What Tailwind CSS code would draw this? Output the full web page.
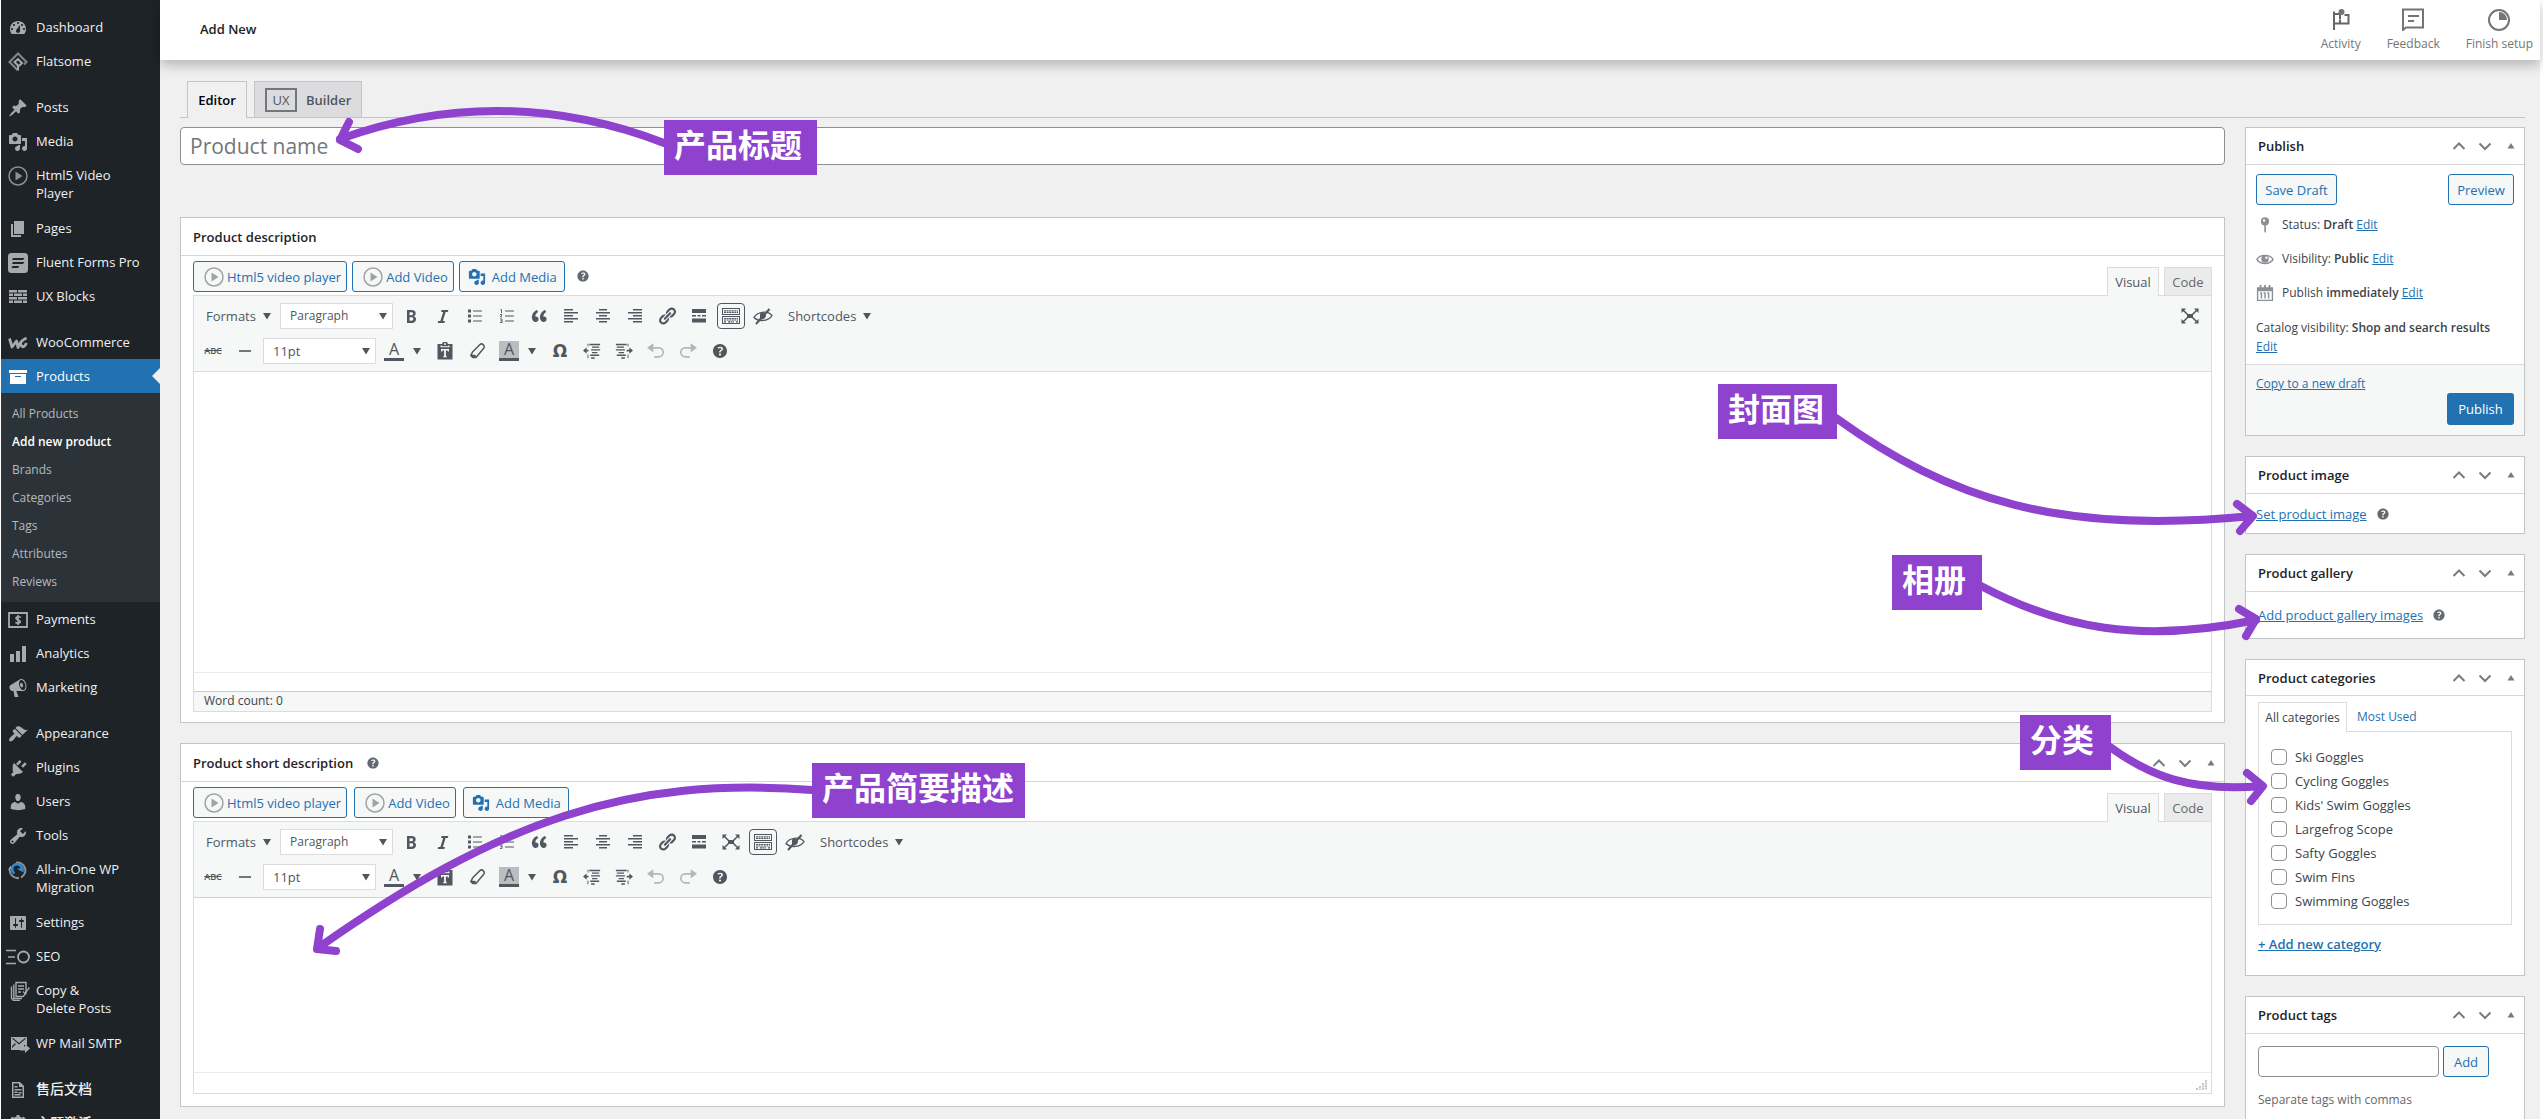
<!DOCTYPE html>
<html lang="en">
<head>
  <meta charset="UTF-8" />
  <meta name="viewport" content="width=device-width, initial-scale=1.0" />
  <title>Add New Product</title>
  <script src="https://cdn.jsdelivr.net/npm/@tailwindcss/browser@4"></script>
</head>
<body class="bg-white fill-current font-['Open_Sans','Noto_Sans_CJK_SC',sans-serif] text-[13px] leading-[18px] text-[#3c434a]">

  <!-- icon sprite -->
  <svg class="hidden">
    <symbol id="i-dashboard" viewBox="0 0 20 20"><path fill-rule="evenodd" d="M3.76 16h12.48c1.1-1.37 1.76-3.11 1.76-5 0-4.42-3.58-8-8-8s-8 3.58-8 8c0 1.89.66 3.63 1.76 5zM10 4c.55 0 1 .45 1 1s-.45 1-1 1-1-.45-1-1 .45-1 1-1zM6 6c.55 0 1 .45 1 1s-.45 1-1 1-1-.45-1-1 .45-1 1-1zm8 0c.55 0 1 .45 1 1s-.45 1-1 1-1-.45-1-1 .45-1 1-1zm-5.37 5.55L12 7v6c0 1.1-.9 2-2 2s-2-.9-2-2c0-.57.24-1.08.63-1.45zM4 10c.55 0 1 .45 1 1s-.45 1-1 1-1-.45-1-1 .45-1 1-1zm12 0c.55 0 1 .45 1 1s-.45 1-1 1-1-.45-1-1 .45-1 1-1z"/></symbol>
    <symbol id="i-flatsome" viewBox="0 0 20 20"><g fill="none" stroke="currentColor" stroke-width="2"><path d="M9.500 18L1.500 10 10 1.500 18.500 10l-2.500 2.500" opacity=".75"/><path d="M10 18.500v-5L6.500 10 10 7l4 4-2.500 2.500H9"/></g></symbol>
    <symbol id="i-post" viewBox="0 0 20 20"><path d="M10.440 3.020l1.820-1.820 6.360 6.350-1.830 1.820c-1.050-.680-2.480-.570-3.410.360l-.750.750c-.920.930-1.040 2.350-.350 3.410l-1.830 1.820-2.410-2.410-2.800 2.790c-.420.420-3.380 2.710-3.800 2.290s1.860-3.390 2.280-3.810l2.790-2.790L4.100 9.360l1.830-1.820c1.050.690 2.480.570 3.400-.360l.750-.750c.930-.920 1.050-2.350.360-3.410z"/></symbol>
    <symbol id="i-media" viewBox="0 0 20 20"><path fill-rule="evenodd" d="M13 11V4c0-.55-.45-1-1-1h-1.670L9 1H5L3.670 3H2c-.55 0-1 .45-1 1v7c0 .55.45 1 1 1h10c.55 0 1-.45 1-1zM7 4.500c1.380 0 2.500 1.120 2.500 2.500S8.380 9.500 7 9.500 4.500 8.380 4.500 7 5.620 4.500 7 4.500zM14 6h5v10.500c0 1.380-1.120 2.500-2.500 2.500S14 17.880 14 16.500s1.120-2.500 2.500-2.500c.17 0 .34.02.5.05V9h-3V6zm-4 8.050V13h2v3.500c0 1.380-1.120 2.500-2.500 2.500S7 17.880 7 16.500 8.120 14 9.500 14c.17 0 .34.02.5.05z"/></symbol>
    <symbol id="i-play" viewBox="0 0 20 20"><circle cx="10" cy="10" r="9" fill="none" stroke="currentColor" stroke-width="1.500"/><path d="M7.500 5.500v9L14.500 10z"/></symbol>
    <symbol id="i-page" viewBox="0 0 20 20"><path d="M6 15V2h10v13H6zm-1 1h8v2H3V5h2v11z"/></symbol>
    <symbol id="i-fluent" viewBox="0 0 20 20"><path fill-rule="evenodd" d="M3.500 0h13A3.500 3.500 0 0 1 20 3.500v13a3.500 3.500 0 0 1-3.500 3.500h-13A3.500 3.500 0 0 1 0 16.500v-13A3.500 3.500 0 0 1 3.500 0zM5 5l-1 2h11l1.500-2zM5 9l-1 2h11l1.500-2zM4.500 13l-1 2H10l1.500-2z"/></symbol>
    <symbol id="i-blocks" viewBox="0 0 20 20"><path d="M1 3h8v2.500H1zM10 3h9v2.500h-9zM1 6.500h4V9H1zM6 6.500h8V9H6zM15 6.500h4V9h-4zM1 10h8v2.500H1zM10 10h9v2.500h-9zM1 13.500h4V16H1zM6 13.500h8V16H6zM15 13.500h4V16h-4z"/></symbol>
    <symbol id="i-woo" viewBox="0 0 20 20"><path d="M1.500 5.500L4 14l4.500-6 1.500 6.500C11 11 13 7.500 18.500 5M12.500 10c1 5.500 4 4.500 6 0" fill="none" stroke="currentColor" stroke-width="2.800" stroke-linejoin="round"/></symbol>
    <symbol id="i-archive" viewBox="0 0 20 20"><path fill-rule="evenodd" d="M19 3v3H1V3h18zM2 7h16v10H2V7zm11 3V9H7v1h6z"/></symbol>
    <symbol id="i-pay" viewBox="0 0 20 20"><path d="M1 3h18v14H1z" fill="none" stroke="currentColor" stroke-width="1.800"/><path d="M12.800 7.600C12 6.500 8 6.200 8 8.300c0 2 4.300 1.200 4.300 3.300 0 2-3.800 1.900-4.900.6M10 5v10" fill="none" stroke="currentColor" stroke-width="1.600"/></symbol>
    <symbol id="i-chart" viewBox="0 0 20 20"><path d="M18 18V2h-4v16h4zm-6 0V7H8v11h4zm-6 0v-8H2v8h4z"/></symbol>
    <symbol id="i-megaphone" viewBox="0 0 20 20"><path fill-rule="evenodd" d="M18.150 5.940c.46 1.620.38 3.220-.02 4.480-.42 1.280-1.260 2.180-2.300 2.480-.16.06-.26.06-.4.06-.06.02-.12.02-.18.02-.06.02-.14.02-.22.02h-6.800l2.220 5.500c.02.14-.06.26-.14.34-.08.1-.24.16-.34.16H6.950c-.1 0-.26-.06-.34-.16-.08-.08-.16-.2-.14-.34l-1-5.500H4.250l-.02-.02c-.5.06-1.080-.18-1.540-.62s-.88-1.080-1.060-1.880c-.24-.8-.2-1.560-.02-2.200.18-.62.58-1.080 1.060-1.300l.02-.02 9-5.400c.1-.06.18-.1.24-.16.06-.04.14-.08.24-.12.16-.08.28-.12.5-.18 1.040-.3 2.240.1 3.220.98s1.840 2.240 2.260 3.860zm-2.580 5.980h-.02c.4-.1.74-.34 1.040-.7.58-.7.86-1.760.86-3.040 0-.64-.1-1.300-.28-1.980-.34-1.360-1.020-2.500-1.780-3.240s-1.680-1.100-2.460-.88c-.82.22-1.400.96-1.700 2-.32 1.040-.28 2.360.06 3.720.38 1.360 1 2.500 1.800 3.240.78.74 1.620 1.100 2.480.88zm-2.540-7.080c.22-.04.42-.02.62.04.38.16.76.48 1.020 1s.42 1.200.42 1.780c0 .3-.04.56-.12.8-.18.48-.44.84-.86.94-.34.1-.8-.06-1.140-.4s-.64-.86-.78-1.500c-.18-.62-.12-1.240.02-1.720s.48-.84.82-.94z"/></symbol>
    <symbol id="i-brush" viewBox="0 0 20 20"><path d="M14.480 11.060L7.410 3.990l1.500-1.500c.5-.56 2.300-.47 3.510.32 1.210.8 1.430 1.280 2.910 2.100 1.180.64 2.450 1.260 4.450.85zm-.71.71L6.700 4.700 4.930 6.470c-.39.39-.39 1.020 0 1.410l1.060 1.060c.39.39.39 1.030 0 1.420-.6.6-1.430 1.110-2.210 1.690-.35.26-.7.53-1.010.84C1.430 14.230.4 16.080 1.400 17.070c.99 1 2.840-.03 4.180-1.360.31-.31.58-.66.85-1.020.57-.78 1.080-1.610 1.690-2.210.39-.39 1.020-.39 1.410 0l1.060 1.060c.39.39 1.020.39 1.410 0z"/></symbol>
    <symbol id="i-plugin" viewBox="0 0 20 20"><path d="M13.110 4.360L9.870 7.600 8 5.730l3.240-3.240c.35-.34 1.050-.2 1.560.32.52.51.66 1.210.31 1.550zm-8 1.770l.91-1.120 9.010 9.010-1.190.84c-.71.71-2.630 1.160-3.820 1.160H8.800c-.47 0-.9.22-1.200.52l-1.850 1.850c-.27.27-.77.27-1.040 0l-1.360-1.370c-.27-.27-.27-.77 0-1.040l1.850-1.850c.31-.3-.47-.74-.47-1.210v-1.220c0-1.280-.33-3.860.38-4.570zm9.910 3.630l3.240-3.240c.34-.35.2-1.050-.32-1.560-.51-.52-1.210-.66-1.550-.31l-3.240 3.240z"/></symbol>
    <symbol id="i-user" viewBox="0 0 20 20"><path d="M10 9.250c-2.270 0-2.730-3.440-2.730-3.440C7 4.020 7.820 2 9.970 2c2.160 0 2.980 2.020 2.710 3.810 0 0-.41 3.440-2.680 3.440zm0 2.570L12.720 10c2.390 0 4.520 2.330 4.520 4.530v2.490s-3.650 1.130-7.240 1.130c-3.650 0-7.240-1.130-7.240-1.130v-2.490c0-2.250 1.940-4.480 4.470-4.480z"/></symbol>
    <symbol id="i-tools" viewBox="0 0 20 20"><path fill-rule="evenodd" d="M16.680 9.770c-1.340 1.340-3.300 1.670-4.950.99l-5.410 6.520c-.99.99-2.590.99-3.580 0s-.99-2.590 0-3.570l6.520-5.420c-.68-1.650-.35-3.610.99-4.950 1.280-1.280 3.120-1.620 4.720-1.060l-2.890 2.890 2.820 2.820 2.860-2.870c.53 1.580.18 3.390-1.080 4.650zM3.810 16.210c.4.39 1.040.39 1.430 0 .4-.4.4-1.040 0-1.430-.39-.4-1.030-.4-1.430 0-.39.39-.39 1.030 0 1.430z"/></symbol>
    <symbol id="i-migrate" viewBox="0 0 20 20"><g fill="none" stroke-width="2"><path d="M8 2.500A8 8 0 0 1 13 17.500M2 8a8 8 0 0 0 9 10" stroke="currentColor" opacity=".8"/><path d="M1 10l1.500-3L5 10" stroke="currentColor" stroke-width="1.500"/><path d="M6.500 13.500A5 5 0 1 1 14 8.500" stroke="#2f8bd0" stroke-width="2.600"/></g><path d="M9 9l7-2-.5 5.500z" fill="#2f8bd0"/></symbol>
    <symbol id="i-settings" viewBox="0 0 20 20"><path fill-rule="evenodd" d="M18 16V4c0-.55-.45-1-1-1H3c-.55 0-1 .45-1 1v12c0 .55.45 1 1 1h14c.55 0 1-.45 1-1zM8 11h1c.55 0 1 .45 1 1s-.45 1-1 1H8v1.500c0 .28-.22.5-.5.5s-.5-.22-.5-.5V13H6c-.55 0-1-.45-1-1s.45-1 1-1h1V5.500c0-.28.22-.5.5-.5s.5.22.5.5V11zm5-2h-1c-.55 0-1-.45-1-1s.45-1 1-1h1V5.500c0-.28.22-.5.5-.5s.5.22.5.5V7h1c.55 0 1 .45 1 1s-.45 1-1 1h-1v5.500c0 .28-.22.5-.5.5s-.5-.22-.5-.5V9z"/></symbol>
    <symbol id="i-seo" viewBox="0 0 24 20"><path d="M0 3.500h10M2 10h7M0 16.500h10" fill="none" stroke="currentColor" stroke-width="1.500"/><circle cx="17.500" cy="10" r="5.500" fill="none" stroke="currentColor" stroke-width="1.800"/></symbol>
    <symbol id="i-copy" viewBox="0 0 20 20"><g fill="none" stroke="currentColor" stroke-width="1.400"><path d="M6 1.500h10v11l-3 3H6z"/><path d="M3.800 3.500v14H12M1.500 5.500v12l2 2H10M8 5h6M8 8h6M8 11h3"/><path d="M13 10.500l2 2 4.500-6"/></g></symbol>
    <symbol id="i-mail" viewBox="0 0 20 20"><path fill-rule="evenodd" d="M1 3h16v8h-3v5H1zM2 4.500l7 6 7-6-1-.5-6 5-6-5zM2 14l4-4-1-.8-3 3z"/><path d="M10 12.500h5V10l5 4.500-5 4.500v-2.500h-5z"/></symbol>
    <symbol id="i-doc" viewBox="0 0 20 20"><path fill-rule="evenodd" d="M4 2h8l4 4v12H4zM5.500 3.500v13h9V7H11V3.500z"/><path d="M6.500 6h3v1.500h-3zM6.500 9h7v1.500h-7zM6.500 11.500h3V13h-3zM10.500 12h3v1.500h-3zM6.500 14h6v1.500h-6z"/></symbol>
    <symbol id="i-gear" viewBox="0 0 20 20"><circle cx="10" cy="10" r="6" fill="none" stroke="currentColor" stroke-width="3"/><path d="M8.500 1h3v3h-3zM2.500 4.500l2-2L7 5 5 7zM15.500 2.500l2 2L15 7l-2-2z"/></symbol>
    <symbol id="i-help" viewBox="0 0 20 20"><path fill-rule="evenodd" d="M17 10c0-3.870-3.140-7-7-7-3.870 0-7 3.130-7 7s3.130 7 7 7c3.860 0 7-3.130 7-7zm-6.300 1.480H9.140v-.43c0-.38.08-.7.24-.98s.46-.57.88-.89c.41-.29.68-.53.81-.71.14-.18.2-.39.2-.62 0-.25-.09-.44-.28-.58-.19-.13-.45-.19-.79-.19-.58 0-1.250.19-2 .57l-.64-1.280c.87-.49 1.800-.74 2.770-.74.81 0 1.450.2 1.920.58.48.39.71.91.71 1.550 0 .43-.09.8-.29 1.110-.19.32-.57.67-1.110 1.060-.38.28-.61.49-.71.63-.1.15-.15.34-.15.57v.35zm-1.470 2.740c-.18-.17-.27-.42-.27-.73 0-.33.08-.58.26-.75s.43-.25.77-.25c.32 0 .57.09.75.26s.27.42.27.74c0 .3-.09.55-.27.72-.18.18-.43.27-.75.27-.33 0-.58-.09-.76-.26z"/></symbol>
    <symbol id="i-caret" viewBox="0 0 8 8"><path d="M0 1h8L4 7.500z"/></symbol>
    <symbol id="i-up" viewBox="0 0 14 14"><path d="M1.500 10L7 4.500l5.500 5.500" fill="none" stroke="currentColor" stroke-width="2"/></symbol>
    <symbol id="i-down" viewBox="0 0 14 14"><path d="M1.500 4.500L7 10l5.500-5.500" fill="none" stroke="currentColor" stroke-width="2"/></symbol>
    <symbol id="i-toggle" viewBox="0 0 14 14"><path d="M3.500 9.500h7L7 4z"/></symbol>
    <symbol id="i-bold" viewBox="0 0 20 20"><path fill-rule="evenodd" d="M6 4v13h4.540c1.370 0 2.460-.33 3.260-1 .8-.66 1.200-1.580 1.200-2.770 0-.84-.17-1.510-.51-2.010s-.9-.85-1.670-1.030v-.09c.57-.1 1.020-.4 1.360-.9s.51-1.130.51-1.910c0-1.140-.39-1.980-1.170-2.500C12.750 4.260 11.500 4 9.780 4H6zm2.570 5.150V6.260h1.360c.73 0 1.270.11 1.610.32.34.22.51.58.51 1.070 0 .54-.16.92-.47 1.150s-.82.35-1.510.35h-1.500zm0 2.190h1.600c1.440 0 2.160.53 2.160 1.610 0 .6-.17 1.050-.51 1.340s-.86.43-1.570.43H8.570v-3.380z"/></symbol>
    <symbol id="i-italic" viewBox="0 0 20 20"><path d="M14.780 6h-2.130l-2.800 9h2.120l-.62 2H4.600l.62-2h2.140l2.800-9H8.030l.62-2h6.750z"/></symbol>
    <symbol id="i-ul" viewBox="0 0 20 20"><path d="M3 3.500h3v3H3zM3 8.500h3v3H3zM3 13.500h3v3H3zM8 4.500h9v1H8zM8 9.500h9v1H8zM8 14.500h9v1H8z"/></symbol>
    <symbol id="i-ol" viewBox="0 0 20 20"><path d="M8 4.500h9v1H8zM8 9.500h9v1H8zM8 14.500h9v1H8z"/><path d="M3.500 3.500h1v3.500M3 8.500h2L3.500 11H5M3 13h2v3.500H3M3.500 14.800H5" fill="none" stroke="currentColor" stroke-width=".9"/></symbol>
    <symbol id="i-quote" viewBox="0 0 20 20"><path d="M9.490 13.220c0-.74-.2-1.380-.61-1.900-.62-.78-1.830-.88-2.530-.72-.29-1.650 1.110-3.750 2.920-4.650L7.880 4c-2.730 1.300-5.420 4.280-4.960 8.050C3.210 14.430 4.590 16 6.540 16c.85 0 1.560-.25 2.120-.75s.83-1.180.83-2.030zm8.050 0c0-.74-.2-1.380-.61-1.900-.63-.78-1.830-.88-2.530-.72-.29-1.650 1.110-3.750 2.920-4.650L15.930 4c-2.730 1.300-5.410 4.280-4.950 8.050.29 2.380 1.660 3.950 3.610 3.950.85 0 1.560-.25 2.120-.75s.83-1.180.83-2.030z"/></symbol>
    <symbol id="i-left" viewBox="0 0 20 20"><path d="M3 3h9v1.500H3zM3 6h14v1.500H3zM3 9h9v1.500H3zM3 12h14v1.500H3zM3 15h9v1.500H3z"/></symbol>
    <symbol id="i-center" viewBox="0 0 20 20"><path d="M6 3h8v1.500H6zM3 6h14v1.500H3zM6 9h8v1.500H6zM3 12h14v1.500H3zM6 15h8v1.500H6z"/></symbol>
    <symbol id="i-right" viewBox="0 0 20 20"><path d="M8 3h9v1.500H8zM3 6h14v1.500H3zM8 9h9v1.500H8zM3 12h14v1.500H3zM8 15h9v1.500H8z"/></symbol>
    <symbol id="i-link" viewBox="0 0 20 20"><path d="M17.740 2.760c1.680 1.690 1.680 4.410 0 6.100l-1.530 1.520c-1.120 1.120-2.700 1.470-4.140 1.090l2.620-2.610.76-.77.76-.76c.84-.84.84-2.200 0-3.040-.84-.85-2.200-.85-3.040 0l-.77.76-3.380 3.380c-.37-1.440-.02-3.020 1.100-4.140l1.520-1.530c1.690-1.680 4.420-1.680 6.100 0zM8.590 13.430l5.340-5.340c.42-.42.42-1.100 0-1.520-.44-.43-1.130-.39-1.530 0l-5.330 5.340c-.42.42-.42 1.100 0 1.520.44.43 1.130.39 1.520 0zm-.76 2.290l4.140-4.150c.38 1.440.03 3.020-1.090 4.140l-1.520 1.530c-1.690 1.680-4.410 1.680-6.100 0-1.680-1.680-1.680-4.420 0-6.100l1.530-1.520c1.120-1.120 2.700-1.470 4.140-1.100l-4.140 4.150c-.85.84-.85 2.200 0 3.050.84.84 2.200.84 3.040 0z"/></symbol>
    <symbol id="i-more" viewBox="0 0 20 20"><path d="M3 3h14v4H3zM3 9h4v1.500H3zM8.500 9h3v1.500h-3zM13 9h4v1.500h-4zM3 12.500h14v4H3z"/></symbol>
    <symbol id="i-kitchen" viewBox="0 0 20 20"><path fill-rule="evenodd" d="M1 2h18v7H1zM2 3v5h16V3zM1 10h18v8H1zM2 11v6h16v-6z"/><path d="M3 4.800h14M3 6.500h14M3 12.500h14M3 14h14M3 15.800h2M7 15.800h6M15 15.800h2" fill="none" stroke="currentColor" stroke-width="1.200" stroke-dasharray="2 .6"/></symbol>
    <symbol id="i-hide" viewBox="0 0 20 20"><path d="M1 11.500C4 6 14 4 19 9.500 16 15 6 16.500 1 11.500z" fill="none" stroke="currentColor" stroke-width="1.300"/><path d="M7 7.500c3-1.500 6-.5 6 2 0 3-4 5-6 3.500z"/><path d="M3 18L16.500 3" fill="none" stroke="currentColor" stroke-width="2"/></symbol>
    <symbol id="i-full" viewBox="0 0 20 20"><path d="M7 8h6v4H7zM1.500 2.500H6L1.500 7zM18.500 2.500H14L18.500 7zM1.500 17.500H6L1.500 13zM18.500 17.500H14l4.500-4.500z"/><path d="M3 4l5 5M17 4l-5 5M3 16l5-5M17 16l-5-5" fill="none" stroke="currentColor" stroke-width="1.500"/></symbol>
    <symbol id="i-hr" viewBox="0 0 20 20"><path d="M4 9.200h12v1.600H4z"/></symbol>
    <symbol id="i-paste" viewBox="0 0 20 20"><path fill-rule="evenodd" d="M7 3l1-2h4l1 2h4.500v15.500h-15V3zM9 2.200v1.600h2V2.200zM5.500 4.500v1.700h9V4.500h-1.300v.7H6.800v-.7zM6 8v2.500h1.200l.3-1h1.600v5.500l-1 .4v.9h3.800v-.9l-1-.4V9.500h1.600l.3 1H14V8z"/></symbol>
    <symbol id="i-eraser" viewBox="0 0 20 20"><path d="M5.500 11L13 3.500c1-1 2.500-.5 3.500.5s1 2.500 0 3.500L9 16.500H6L4 14.500z" fill="none" stroke="currentColor" stroke-width="1.500"/><path d="M3.500 13.500L9 14l-1 3H5.500l-2-2z"/></symbol>
    <symbol id="i-outdent" viewBox="0 0 20 20"><path d="M7 2h12v1.500H7zM10 5h8v1.500h-8zM9 8h10v1.500H9zM10 11h6v1.500h-6zM8 14h10v1.500H8zM9 17h4v1.500H9zM6 8.500H4V6L0 9.500 4 13v-2.500h2zM5 2h1v3H5zM5 14h1v4H5z"/></symbol>
    <symbol id="i-indent" viewBox="0 0 20 20"><path d="M1 2h12v1.500H1zM2 5h8v1.500H2zM1 8h10v1.500H1zM4 11h6v1.500H4zM2 14h10v1.500H2zM7 17h4v1.500H7zM13 8.500h3V6l4 3.500L16 13v-2.500h-3zM14 2h1v3h-1zM14 14h1v4h-1z"/></symbol>
    <symbol id="i-undo" viewBox="0 0 20 20"><path d="M4 6.500h9a5 5 0 0 1 0 10H8" fill="none" stroke="currentColor" stroke-width="1.800"/><path d="M7 1.500v10L0 6.500z"/></symbol>
    <symbol id="i-redo" viewBox="0 0 20 20"><path d="M16 6.500H7a5 5 0 0 0 0 10h5" fill="none" stroke="currentColor" stroke-width="1.800"/><path d="M13 1.500v10l7-5z"/></symbol>
    <symbol id="i-grip" viewBox="0 0 12 12"><path d="M1 10v2M4 8v4M7 5v7M10 2v10" fill="none" stroke="currentColor" stroke-width="1" stroke-dasharray="2 .5"/></symbol>
    <symbol id="i-pin" viewBox="0 0 20 20"><circle cx="10" cy="6" r="4.500"/><path d="M9.200 9h1.800v10l-1.800-1.500z"/><circle cx="9" cy="5" r="1.300" fill="#fff"/></symbol>
    <symbol id="i-eye" viewBox="0 0 20 20"><path d="M1 10.500C4.500 4.500 15.500 4.500 19 10.500 15.500 16.500 4.500 16.500 1 10.500z" fill="none" stroke="currentColor" stroke-width="1.600"/><circle cx="10" cy="10" r="4.200"/><circle cx="11.500" cy="8.500" r="1.300" fill="#fff"/></symbol>
    <symbol id="i-calendar" viewBox="0 0 20 20"><path fill-rule="evenodd" d="M1 3.500h3V1h2v2.500h3V1h2v2.500h3V1h2v2.500h3V19H1zM2.500 8v9.500h15V8z"/><path d="M6 9.500v6.500M10 9.500v6.500M14 9.500v6.500M4.500 10H6M8.500 10H10M12.500 10H14" fill="none" stroke="currentColor" stroke-width="1.600"/></symbol>
  </svg>

  <div class="relative flex h-screen overflow-hidden pr-[3px] pl-px">

    <!-- admin menu -->
    <nav class="w-[159px] shrink-0 bg-[#1d2327] pt-[10px] text-[#f0f0f1]">
      <ul>
        <li><a href="#" class="flex h-[34px] items-start gap-2 py-2 pl-[7px]"><svg class="size-5 shrink-0 text-[#a7aaad]"><use href="#i-dashboard"/></svg>Dashboard</a></li>
        <li class="mb-3"><a href="#" class="flex h-[34px] items-start gap-2 py-2 pl-[7px]"><svg class="size-5 shrink-0 text-[#a7aaad]"><use href="#i-flatsome"/></svg>Flatsome</a></li>
        <li><a href="#" class="flex h-[34px] items-start gap-2 py-2 pl-[7px]"><svg class="size-5 shrink-0 text-[#a7aaad]"><use href="#i-post"/></svg>Posts</a></li>
        <li><a href="#" class="flex h-[34px] items-start gap-2 py-2 pl-[7px]"><svg class="size-5 shrink-0 text-[#a7aaad]"><use href="#i-media"/></svg>Media</a></li>
        <li><a href="#" class="flex h-[53px] items-start gap-2 py-2 pl-[7px]"><svg class="size-5 shrink-0 text-[#8c8f94]"><use href="#i-play"/></svg>Html5 Video<br>Player</a></li>
        <li><a href="#" class="flex h-[34px] items-start gap-2 py-2 pl-[7px]"><svg class="size-5 shrink-0 text-[#a7aaad]"><use href="#i-page"/></svg>Pages</a></li>
        <li><a href="#" class="flex h-[34px] items-start gap-2 py-2 pl-[7px]"><svg class="size-5 shrink-0 text-[#a7aaad]"><use href="#i-fluent"/></svg>Fluent Forms Pro</a></li>
        <li class="mb-3"><a href="#" class="flex h-[34px] items-start gap-2 py-2 pl-[7px]"><svg class="size-5 shrink-0 text-[#a7aaad]"><use href="#i-blocks"/></svg>UX Blocks</a></li>
        <li><a href="#" class="flex h-[34px] items-start gap-2 py-2 pl-[7px]"><svg class="size-5 shrink-0 text-[#a7aaad]"><use href="#i-woo"/></svg>WooCommerce</a></li>
        <li>
          <a href="#" class="relative flex h-[34px] items-start gap-2 bg-[#2271b1] py-2 pl-[7px] text-white"><svg class="size-5 shrink-0"><use href="#i-archive"/></svg>Products
            <span class="absolute top-[9px] right-0 border-y-8 border-r-8 border-y-transparent border-r-[#f0f0f1]"></span></a>
          <ul class="bg-[#2c3338] pt-[7px] pb-[6px] text-xs leading-7 text-[#b4b9be]">
            <li><a href="#" class="block pl-[11px]">All Products</a></li>
            <li><a href="#" class="block pl-[11px] font-semibold text-white">Add new product</a></li>
            <li><a href="#" class="block pl-[11px]">Brands</a></li>
            <li><a href="#" class="block pl-[11px]">Categories</a></li>
            <li><a href="#" class="block pl-[11px]">Tags</a></li>
            <li><a href="#" class="block pl-[11px]">Attributes</a></li>
            <li><a href="#" class="block pl-[11px]">Reviews</a></li>
          </ul>
        </li>
        <li><a href="#" class="flex h-[34px] items-start gap-2 py-2 pl-[7px]"><svg class="size-5 shrink-0 text-[#a7aaad]"><use href="#i-pay"/></svg>Payments</a></li>
        <li><a href="#" class="flex h-[34px] items-start gap-2 py-2 pl-[7px]"><svg class="size-5 shrink-0 text-[#a7aaad]"><use href="#i-chart"/></svg>Analytics</a></li>
        <li class="mb-3"><a href="#" class="flex h-[34px] items-start gap-2 py-2 pl-[7px]"><svg class="size-5 shrink-0 text-[#a7aaad]"><use href="#i-megaphone"/></svg>Marketing</a></li>
        <li><a href="#" class="flex h-[34px] items-start gap-2 py-2 pl-[7px]"><svg class="size-5 shrink-0 text-[#a7aaad]"><use href="#i-brush"/></svg>Appearance</a></li>
        <li><a href="#" class="flex h-[34px] items-start gap-2 py-2 pl-[7px]"><svg class="size-5 shrink-0 text-[#a7aaad]"><use href="#i-plugin"/></svg>Plugins</a></li>
        <li><a href="#" class="flex h-[34px] items-start gap-2 py-2 pl-[7px]"><svg class="size-5 shrink-0 text-[#a7aaad]"><use href="#i-user"/></svg>Users</a></li>
        <li><a href="#" class="flex h-[34px] items-start gap-2 py-2 pl-[7px]"><svg class="size-5 shrink-0 text-[#a7aaad]"><use href="#i-tools"/></svg>Tools</a></li>
        <li><a href="#" class="flex h-[53px] items-start gap-2 py-2 pl-[7px]"><svg class="size-5 shrink-0 text-[#a7aaad]"><use href="#i-migrate"/></svg>All-in-One WP<br>Migration</a></li>
        <li><a href="#" class="flex h-[34px] items-start gap-2 py-2 pl-[7px]"><svg class="size-5 shrink-0 text-[#a7aaad]"><use href="#i-settings"/></svg>Settings</a></li>
        <li><a href="#" class="flex h-[34px] items-start gap-[6px] py-2 pl-[5px]"><svg class="h-5 w-6 shrink-0 text-[#a7aaad]"><use href="#i-seo"/></svg>SEO</a></li>
        <li><a href="#" class="flex h-[53px] items-start gap-[6px] py-2 pl-[9px]"><svg class="size-5 shrink-0 text-[#a7aaad]"><use href="#i-copy"/></svg>Copy &amp;<br>Delete Posts</a></li>
        <li class="mb-3"><a href="#" class="flex h-[34px] items-start gap-[6px] py-2 pl-[9px]"><svg class="size-5 shrink-0 text-[#a7aaad]"><use href="#i-mail"/></svg>WP Mail SMTP</a></li>
        <li><a href="#" class="flex h-[34px] items-start gap-2 py-2 pl-[7px] text-sm leading-[18px] font-medium"><svg class="size-5 shrink-0 text-[#a7aaad]"><use href="#i-doc"/></svg>售后文档</a></li>
        <li><a href="#" class="flex h-[34px] items-start gap-2 py-2 pl-[7px] text-sm leading-[18px] font-medium"><svg class="size-5 shrink-0 text-[#a7aaad]"><use href="#i-gear"/></svg>主题激活</a></li>
      </ul>
    </nav>

    <div class="min-w-0 flex-1 bg-[#f0f0f1]">
      <header class="flex h-[60px] items-start justify-between bg-white pr-[7px] pl-10 shadow-[0_5px_12px_rgba(0,0,0,0.25)]">
        <h1 class="pt-5 font-semibold text-[#1e1e1e]">Add New</h1>
        <div class="flex gap-[26px] pt-[7px] text-xs leading-[18px] text-[#757575]">
          <button class="flex flex-col items-center gap-1"><svg class="size-6" viewBox="0 0 24 24" fill="none" stroke="#666" stroke-width="2"><path d="M5 4.500V23M5 7h6v5M5 16.500h6v-4M11 16.500h8.500V8h-4"/><circle cx="12.500" cy="5" r="3" fill="#757575" stroke="none"/></svg>Activity</button>
          <button class="flex flex-col items-center gap-1"><svg class="size-6" viewBox="0 0 24 24" fill="none" stroke="#757575" stroke-width="2"><path d="M2 2.500h20v18H5L2 23zM7 9h11M7 14h6"/></svg>Feedback</button>
          <button class="flex flex-col items-center gap-1"><svg class="size-6" viewBox="0 0 24 24" fill="none" stroke="#757575" stroke-width="2"><circle cx="12" cy="13" r="10"/><path d="M12 13V5a8 8 0 0 1 8 8z" fill="#757575" stroke="none"/></svg>Finish setup</button>
        </div>
      </header>

      <main class="pr-[15px] pl-5">
        <div class="mt-[21px] flex h-[37px] items-end gap-[7px] border-b border-[#c3c4c7] pl-[7px] font-semibold">
          <a href="#" class="-mb-px flex h-[37px] w-[60px] items-center justify-center border border-b-0 border-[#c3c4c7] bg-[#f0f0f1] text-black">Editor</a>
          <a href="#" class="flex h-9 items-center gap-[9px] border border-b-0 border-[#c3c4c7] bg-[#dcdcde] px-[10px] text-[#50575e]"><span class="flex h-6 w-8 items-center justify-center border-2 border-[#72777c] font-normal">UX</span>Builder</a>
        </div>

        <div class="mt-[9px] flex gap-5">
          <div class="min-w-0 flex-1">
            <input type="text" aria-label="Product name" placeholder="Product name" class="block h-[38px] w-full rounded border border-[#8c8f94] bg-white px-[9px] text-[21px] placeholder:text-[#72777c]">

            <!-- long description -->
            <section class="mt-[52px] border border-[#c3c4c7] bg-white pb-[10px]">
              <div class="flex h-[38px] items-center border-b border-[#d5d6d9] pl-3">
                <h2 class="font-semibold text-[#1d2327]">Product description</h2>
              </div>
              <div class="px-3 pt-[5px]">
                <div class="flex h-[34px] items-start justify-between">
                  <div class="flex gap-[5px]">
                    <button class="flex h-[31px] items-center gap-[3px] rounded-[3px] border border-[#2271b1] bg-[#f6f7f7] pr-[5px] pl-[10px] text-[#2271b1]"><svg class="size-5 text-[#a0a3a6]"><use href="#i-play"/></svg>Html5 video player</button>
                    <button class="flex h-[31px] items-center gap-[3px] rounded-[3px] border border-[#2271b1] bg-[#f6f7f7] pr-[5px] pl-[10px] text-[#2271b1]"><svg class="size-5 text-[#a0a3a6]"><use href="#i-play"/></svg>Add Video</button>
                    <button class="flex h-[31px] items-center gap-[6px] rounded-[3px] border border-[#2271b1] bg-[#f6f7f7] pr-[7px] pl-2 text-[#2271b1]"><svg class="size-[18px]"><use href="#i-media"/></svg>Add Media</button>
                    <svg class="mt-[7px] ml-[5px] size-4 text-[#646970]"><use href="#i-help"/></svg>
                  </div>
                  <div class="flex gap-[5px] self-end">
                    <button class="relative z-10 -mb-px h-[29px] w-[52px] border border-b-0 border-[#dcdcde] bg-[#f6f7f7] text-[#50575e]">Visual</button>
                    <button class="h-7 w-12 border border-b-0 border-[#dcdcde] bg-[#ebebec] text-[#646970]">Code</button>
                  </div>
                </div>
                <div class="border border-[#dcdcde]">
                  <div class="flex h-[76px] flex-col gap-[9px] border-b border-[#dcdcde] bg-[#f6f7f7] pt-[7px] text-[#50575e]">
                    <div class="flex h-[26px] items-center">
                      <button class="flex w-[86px] items-center gap-[7px] pl-3">Formats<svg class="size-2"><use href="#i-caret"/></svg></button>
                      <div class="relative mr-0.5 flex w-[113px] items-center">
                        <select aria-label="Block format" class="h-[26px] w-full appearance-none border border-[#dcdcde] bg-white pl-[9px] text-xs"><option>Paragraph</option></select>
                        <svg class="pointer-events-none absolute right-[6px] size-2"><use href="#i-caret"/></svg>
                      </div>
                      <button class="flex w-8 justify-center"><svg class="size-5"><use href="#i-bold"/></svg></button>
                      <button class="flex w-8 justify-center"><svg class="size-5"><use href="#i-italic"/></svg></button>
                      <button class="flex w-8 justify-center"><svg class="size-5"><use href="#i-ul"/></svg></button>
                      <button class="flex w-8 justify-center"><svg class="size-5"><use href="#i-ol"/></svg></button>
                      <button class="flex w-8 justify-center"><svg class="size-5"><use href="#i-quote"/></svg></button>
                      <button class="flex w-8 justify-center"><svg class="size-5"><use href="#i-left"/></svg></button>
                      <button class="flex w-8 justify-center"><svg class="size-5"><use href="#i-center"/></svg></button>
                      <button class="flex w-8 justify-center"><svg class="size-5"><use href="#i-right"/></svg></button>
                      <button class="flex w-8 justify-center"><svg class="size-5"><use href="#i-link"/></svg></button>
                      <button class="flex w-8 justify-center"><svg class="size-5"><use href="#i-more"/></svg></button>
                      <button class="mx-0.5 flex h-[26px] w-7 items-center justify-center rounded-sm border border-[#50575e]"><svg class="size-5"><use href="#i-kitchen"/></svg></button>
                      <button class="flex w-8 justify-center"><svg class="size-5"><use href="#i-hide"/></svg></button>
                      <button class="flex items-center gap-[7px] pl-[9px]">Shortcodes<svg class="size-2"><use href="#i-caret"/></svg></button>
                      <button class="mr-[11px] ml-auto"><svg class="size-5"><use href="#i-full"/></svg></button>
                    </div>
                    <div class="flex h-[26px] items-center pl-[3px]">
                      <button class="w-8 text-[9px] font-semibold line-through">ABC</button>
                      <button class="flex w-8 justify-center"><svg class="size-5"><use href="#i-hr"/></svg></button>
                      <div class="relative mx-0.5 flex w-[113px] items-center">
                        <select aria-label="Font size" class="h-[26px] w-full appearance-none border border-[#dcdcde] bg-white pl-[9px] text-[13px]"><option>11pt</option></select>
                        <svg class="pointer-events-none absolute right-[6px] size-2"><use href="#i-caret"/></svg>
                      </div>
                      <button class="flex w-8 justify-center"><span class="h-5 w-5 border-b-[3px] border-[#50575e] text-base leading-[17px]">A</span></button>
                      <button class="w-[19px] pl-[3px]"><svg class="size-2"><use href="#i-caret"/></svg></button>
                      <button class="flex w-8 justify-center"><svg class="size-5"><use href="#i-paste"/></svg></button>
                      <button class="flex w-8 justify-center"><svg class="size-5"><use href="#i-eraser"/></svg></button>
                      <button class="flex w-8 justify-center"><span class="h-5 w-5 border-b-[3px] border-[#50575e] bg-[#bcbdbf] text-base leading-[17px]">A</span></button>
                      <button class="w-[19px] pl-[3px]"><svg class="size-2"><use href="#i-caret"/></svg></button>
                      <button class="w-8 font-['DejaVu_Sans',sans-serif] text-[17px] font-bold">Ω</button>
                      <button class="flex w-8 justify-center"><svg class="size-[18px]"><use href="#i-outdent"/></svg></button>
                      <button class="flex w-8 justify-center"><svg class="size-[18px]"><use href="#i-indent"/></svg></button>
                      <button class="flex w-8 justify-center text-[#b4b6b9]"><svg class="size-[18px]"><use href="#i-undo"/></svg></button>
                      <button class="flex w-8 justify-center text-[#b4b6b9]"><svg class="size-[18px]"><use href="#i-redo"/></svg></button>
                      <button class="flex w-8 justify-center"><svg class="size-5"><use href="#i-help"/></svg></button>
                    </div>
                  </div>
                  <textarea aria-label="Product description" class="block h-[300px] w-full resize-none p-3"></textarea>
                  <div class="h-[19px] border-t border-[#ebebec]"></div>
                  <div class="h-5 border-t border-[#c9cbce] bg-[#f6f7f7] pl-[10px] text-xs leading-[18px]">Word count: 0</div>
                </div>
              </div>
            </section>

            <!-- short description -->
            <section class="mt-5 border border-[#c3c4c7] bg-white pb-3">
              <div class="flex h-[38px] items-center border-b border-[#d5d6d9] pr-[6px] pl-3">
                <h2 class="font-semibold text-[#1d2327]">Product short description</h2>
                <svg class="ml-3 size-4 text-[#646970]"><use href="#i-help"/></svg>
                <div class="ml-auto flex gap-3 text-[#787c82]">
                  <button><svg class="size-[14px]"><use href="#i-up"/></svg></button>
                  <button><svg class="size-[14px]"><use href="#i-down"/></svg></button>
                  <button><svg class="size-[14px]"><use href="#i-toggle"/></svg></button>
                </div>
              </div>
              <div class="px-3 pt-[5px]">
                <div class="flex h-[34px] items-start justify-between">
                  <div class="flex gap-[7px]">
                    <button class="flex h-[31px] items-center gap-[3px] rounded-[3px] border border-[#2271b1] bg-[#f6f7f7] pr-[5px] pl-[10px] text-[#2271b1]"><svg class="size-5 text-[#a0a3a6]"><use href="#i-play"/></svg>Html5 video player</button>
                    <button class="flex h-[31px] items-center gap-[3px] rounded-[3px] border border-[#2271b1] bg-[#f6f7f7] pr-[5px] pl-[10px] text-[#2271b1]"><svg class="size-5 text-[#a0a3a6]"><use href="#i-play"/></svg>Add Video</button>
                    <button class="flex h-[31px] items-center gap-[6px] rounded-[3px] border border-[#2271b1] bg-[#f6f7f7] pr-[7px] pl-2 text-[#2271b1]"><svg class="size-[18px]"><use href="#i-media"/></svg>Add Media</button>
                  </div>
                  <div class="flex gap-[5px] self-end">
                    <button class="relative z-10 -mb-px h-[29px] w-[52px] border border-b-0 border-[#dcdcde] bg-[#f6f7f7] text-[#50575e]">Visual</button>
                    <button class="h-7 w-12 border border-b-0 border-[#dcdcde] bg-[#ebebec] text-[#646970]">Code</button>
                  </div>
                </div>
                <div class="border border-[#dcdcde]">
                  <div class="flex h-[76px] flex-col gap-[9px] border-b border-[#d0d1d4] bg-[#f6f7f7] pt-[7px] text-[#50575e]">
                    <div class="flex h-[26px] items-center">
                      <button class="flex w-[86px] items-center gap-[7px] pl-3">Formats<svg class="size-2"><use href="#i-caret"/></svg></button>
                      <div class="relative mr-0.5 flex w-[113px] items-center">
                        <select aria-label="Block format" class="h-[26px] w-full appearance-none border border-[#dcdcde] bg-white pl-[9px] text-xs"><option>Paragraph</option></select>
                        <svg class="pointer-events-none absolute right-[6px] size-2"><use href="#i-caret"/></svg>
                      </div>
                      <button class="flex w-8 justify-center"><svg class="size-5"><use href="#i-bold"/></svg></button>
                      <button class="flex w-8 justify-center"><svg class="size-5"><use href="#i-italic"/></svg></button>
                      <button class="flex w-8 justify-center"><svg class="size-5"><use href="#i-ul"/></svg></button>
                      <button class="flex w-8 justify-center"><svg class="size-5"><use href="#i-ol"/></svg></button>
                      <button class="flex w-8 justify-center"><svg class="size-5"><use href="#i-quote"/></svg></button>
                      <button class="flex w-8 justify-center"><svg class="size-5"><use href="#i-left"/></svg></button>
                      <button class="flex w-8 justify-center"><svg class="size-5"><use href="#i-center"/></svg></button>
                      <button class="flex w-8 justify-center"><svg class="size-5"><use href="#i-right"/></svg></button>
                      <button class="flex w-8 justify-center"><svg class="size-5"><use href="#i-link"/></svg></button>
                      <button class="flex w-8 justify-center"><svg class="size-5"><use href="#i-more"/></svg></button>
                      <button class="flex w-8 justify-center"><svg class="size-5"><use href="#i-full"/></svg></button>
                      <button class="mx-0.5 flex h-[26px] w-7 items-center justify-center rounded-sm border border-[#50575e]"><svg class="size-5"><use href="#i-kitchen"/></svg></button>
                      <button class="flex w-8 justify-center"><svg class="size-5"><use href="#i-hide"/></svg></button>
                      <button class="flex items-center gap-[7px] pl-[9px]">Shortcodes<svg class="size-2"><use href="#i-caret"/></svg></button>
                    </div>
                    <div class="flex h-[26px] items-center pl-[3px]">
                      <button class="w-8 text-[9px] font-semibold line-through">ABC</button>
                      <button class="flex w-8 justify-center"><svg class="size-5"><use href="#i-hr"/></svg></button>
                      <div class="relative mx-0.5 flex w-[113px] items-center">
                        <select aria-label="Font size" class="h-[26px] w-full appearance-none border border-[#dcdcde] bg-white pl-[9px] text-[13px]"><option>11pt</option></select>
                        <svg class="pointer-events-none absolute right-[6px] size-2"><use href="#i-caret"/></svg>
                      </div>
                      <button class="flex w-8 justify-center"><span class="h-5 w-5 border-b-[3px] border-[#50575e] text-base leading-[17px]">A</span></button>
                      <button class="w-[19px] pl-[3px]"><svg class="size-2"><use href="#i-caret"/></svg></button>
                      <button class="flex w-8 justify-center"><svg class="size-5"><use href="#i-paste"/></svg></button>
                      <button class="flex w-8 justify-center"><svg class="size-5"><use href="#i-eraser"/></svg></button>
                      <button class="flex w-8 justify-center"><span class="h-5 w-5 border-b-[3px] border-[#50575e] bg-[#bcbdbf] text-base leading-[17px]">A</span></button>
                      <button class="w-[19px] pl-[3px]"><svg class="size-2"><use href="#i-caret"/></svg></button>
                      <button class="w-8 font-['DejaVu_Sans',sans-serif] text-[17px] font-bold">Ω</button>
                      <button class="flex w-8 justify-center"><svg class="size-[18px]"><use href="#i-outdent"/></svg></button>
                      <button class="flex w-8 justify-center"><svg class="size-[18px]"><use href="#i-indent"/></svg></button>
                      <button class="flex w-8 justify-center text-[#b4b6b9]"><svg class="size-[18px]"><use href="#i-undo"/></svg></button>
                      <button class="flex w-8 justify-center text-[#b4b6b9]"><svg class="size-[18px]"><use href="#i-redo"/></svg></button>
                      <button class="flex w-8 justify-center"><svg class="size-5"><use href="#i-help"/></svg></button>
                    </div>
                  </div>
                  <textarea aria-label="Product short description" class="block h-[174px] w-full resize-none p-3"></textarea>
                  <div class="flex h-[21px] items-end justify-end border-t border-[#ebebec] pr-[3px] pb-[3px]"><svg class="size-3 text-[#8c8f94]"><use href="#i-grip"/></svg></div>
                </div>
              </div>
            </section>
          </div>

          <!-- right column -->
          <aside class="flex w-[280px] shrink-0 flex-col gap-5">
            <section class="border border-[#c3c4c7] bg-white">
              <div class="flex h-[37px] items-center justify-between border-b border-[#d5d6d9] pr-[6px] pl-3">
                <h2 class="font-semibold text-[#1d2327]">Publish</h2>
                <div class="flex gap-3 text-[#787c82]">
                  <button><svg class="size-[14px]"><use href="#i-up"/></svg></button>
                  <button><svg class="size-[14px]"><use href="#i-down"/></svg></button>
                  <button><svg class="size-[14px]"><use href="#i-toggle"/></svg></button>
                </div>
              </div>
              <div class="px-[10px] pt-[9px] pb-2">
                <div class="mb-[3px] flex justify-between">
                  <button class="h-[31px] w-[81px] rounded-[3px] border border-[#2271b1] bg-[#f6f7f7] text-[#2271b1]">Save Draft</button>
                  <button class="h-[31px] w-[66px] rounded-[3px] border border-[#2271b1] bg-[#f6f7f7] text-[#2271b1]">Preview</button>
                </div>
                <div class="text-xs">
                  <div class="flex h-[34px] items-center gap-2"><svg class="size-[18px] text-[#8c8f94]"><use href="#i-pin"/></svg><p>Status: <b class="font-semibold">Draft</b> <a href="#" class="text-[#2271b1] underline">Edit</a></p></div>
                  <div class="flex h-[34px] items-center gap-2"><svg class="size-[18px] text-[#8c8f94]"><use href="#i-eye"/></svg><p>Visibility: <b class="font-semibold">Public</b> <a href="#" class="text-[#2271b1] underline">Edit</a></p></div>
                  <div class="flex h-[34px] items-center gap-2"><svg class="size-[18px] text-[#8c8f94]"><use href="#i-calendar"/></svg><p>Publish <b class="font-semibold">immediately</b> <a href="#" class="text-[#2271b1] underline">Edit</a></p></div>
                  <p class="pt-2 leading-[19px]">Catalog visibility: <b class="font-semibold">Shop and search results</b><br><a href="#" class="text-[#2271b1] underline">Edit</a></p>
                </div>
              </div>
              <div class="flex h-[71px] justify-between border-t border-[#dcdcde] bg-[#f6f7f7] px-[10px]">
                <a href="#" class="mt-[10px] self-start text-xs leading-[18px] text-[#2271b1] underline">Copy to a new draft</a>
                <button class="mb-[10px] h-8 w-[67px] self-end rounded-[3px] bg-[#2271b1] text-white">Publish</button>
              </div>
            </section>

            <section class="border border-[#c3c4c7] bg-white">
              <div class="flex h-[37px] items-center justify-between border-b border-[#d5d6d9] pr-[6px] pl-3">
                <h2 class="font-semibold text-[#1d2327]">Product image</h2>
                <div class="flex gap-3 text-[#787c82]">
                  <button><svg class="size-[14px]"><use href="#i-up"/></svg></button>
                  <button><svg class="size-[14px]"><use href="#i-down"/></svg></button>
                  <button><svg class="size-[14px]"><use href="#i-toggle"/></svg></button>
                </div>
              </div>
              <div class="flex h-[39px] items-center gap-2 px-[10px]"><a href="#" class="text-[#2271b1] underline">Set product image</a><svg class="size-4 text-[#646970]"><use href="#i-help"/></svg></div>
            </section>

            <section class="border border-[#c3c4c7] bg-white">
              <div class="flex h-[37px] items-center justify-between border-b border-[#d5d6d9] pr-[6px] pl-3">
                <h2 class="font-semibold text-[#1d2327]">Product gallery</h2>
                <div class="flex gap-3 text-[#787c82]">
                  <button><svg class="size-[14px]"><use href="#i-up"/></svg></button>
                  <button><svg class="size-[14px]"><use href="#i-down"/></svg></button>
                  <button><svg class="size-[14px]"><use href="#i-toggle"/></svg></button>
                </div>
              </div>
              <div class="flex h-[46px] items-center gap-2 px-3"><a href="#" class="text-[#2271b1] underline">Add product gallery images</a><svg class="size-4 text-[#646970]"><use href="#i-help"/></svg></div>
            </section>

            <section class="border border-[#c3c4c7] bg-white">
              <div class="flex h-[36px] items-center justify-between border-b border-[#d5d6d9] pr-[6px] pl-3">
                <h2 class="font-semibold text-[#1d2327]">Product categories</h2>
                <div class="flex gap-3 text-[#787c82]">
                  <button><svg class="size-[14px]"><use href="#i-up"/></svg></button>
                  <button><svg class="size-[14px]"><use href="#i-down"/></svg></button>
                  <button><svg class="size-[14px]"><use href="#i-toggle"/></svg></button>
                </div>
              </div>
              <div class="px-3 pt-[6px] pb-[22px]">
                <div class="flex">
                  <a href="#" class="relative z-10 -mb-px flex h-[30px] w-[89px] items-center justify-center border border-b-0 border-[#dcdcde] bg-white text-xs">All categories</a>
                  <a href="#" class="flex h-[29px] items-center pl-[10px] text-xs text-[#2271b1]">Most Used</a>
                </div>
                <div class="flex h-[194px] flex-col border border-[#dcdcde] px-3 pt-[13px]">
                  <label class="flex h-6 items-center gap-2"><input type="checkbox" class="size-4 appearance-none rounded border border-[#8c8f94] bg-white">Ski Goggles</label>
                  <label class="flex h-6 items-center gap-2"><input type="checkbox" class="size-4 appearance-none rounded border border-[#8c8f94] bg-white">Cycling Goggles</label>
                  <label class="flex h-6 items-center gap-2"><input type="checkbox" class="size-4 appearance-none rounded border border-[#8c8f94] bg-white">Kids' Swim Goggles</label>
                  <label class="flex h-6 items-center gap-2"><input type="checkbox" class="size-4 appearance-none rounded border border-[#8c8f94] bg-white">Largefrog Scope</label>
                  <label class="flex h-6 items-center gap-2"><input type="checkbox" class="size-4 appearance-none rounded border border-[#8c8f94] bg-white">Safty Goggles</label>
                  <label class="flex h-6 items-center gap-2"><input type="checkbox" class="size-4 appearance-none rounded border border-[#8c8f94] bg-white">Swim Fins</label>
                  <label class="flex h-6 items-center gap-2"><input type="checkbox" class="size-4 appearance-none rounded border border-[#8c8f94] bg-white">Swimming Goggles</label>
                </div>
                <a href="#" class="mt-[10px] inline-block font-semibold text-[#2271b1] underline">+ Add new category</a>
              </div>
            </section>

            <section class="border border-[#c3c4c7] bg-white">
              <div class="flex h-[37px] items-center justify-between border-b border-[#d5d6d9] pr-[6px] pl-3">
                <h2 class="font-semibold text-[#1d2327]">Product tags</h2>
                <div class="flex gap-3 text-[#787c82]">
                  <button><svg class="size-[14px]"><use href="#i-up"/></svg></button>
                  <button><svg class="size-[14px]"><use href="#i-down"/></svg></button>
                  <button><svg class="size-[14px]"><use href="#i-toggle"/></svg></button>
                </div>
              </div>
              <div class="px-3 pt-3 pb-4">
                <div class="mb-[14px] flex gap-1">
                  <input type="text" aria-label="Add new tag" class="h-[31px] w-[181px] rounded border border-[#8c8f94] bg-white px-2">
                  <button class="h-[31px] w-[46px] rounded-[3px] border border-[#2271b1] bg-[#f6f7f7] text-[#2271b1]">Add</button>
                </div>
                <p class="text-xs leading-[18px] text-[#646970]">Separate tags with commas</p>
              </div>
            </section>
          </aside>
        </div>
      </main>
    </div>

    <!-- annotations -->
    <div class="pointer-events-none absolute inset-0 z-20 text-[32px] leading-[50px] font-bold text-white">
      <svg class="absolute inset-0 h-full w-full" fill="none" stroke="#8e42cd" stroke-width="8" stroke-linecap="round" stroke-linejoin="round">
        <path d="M664 143Q502 81 340 139M349 122L340 140L358 149"/>
        <path d="M812 790C630 776 500 820 318 948M320 929L317 949L336 951"/>
        <path d="M1836 418C1950 500 2060 535 2252 516M2237 504L2253 516L2240 531"/>
        <path d="M1981 586C2060 628 2140 644 2256 620M2239 609L2256 619L2246 636"/>
        <path d="M2110 747C2150 776 2190 792 2262 786M2247 773L2263 786L2251 801"/>
      </svg>
      <div class="absolute top-[120px] left-[664px] h-[55px] w-[153px] bg-[#8e42cd] pl-[10px]">产品标题</div>
      <div class="absolute top-[763px] left-[812px] h-[55px] w-[213px] bg-[#8e42cd] pl-[10px]">产品简要描述</div>
      <div class="absolute top-[384px] left-[1718px] h-[55px] w-[119px] bg-[#8e42cd] pl-[10px]">封面图</div>
      <div class="absolute top-[555px] left-[1892px] h-[55px] w-[90px] bg-[#8e42cd] pl-[10px]">相册</div>
      <div class="absolute top-[715px] left-[2020px] h-[55px] w-[91px] bg-[#8e42cd] pl-[10px]">分类</div>
    </div>
  </div>
</body>
</html>
